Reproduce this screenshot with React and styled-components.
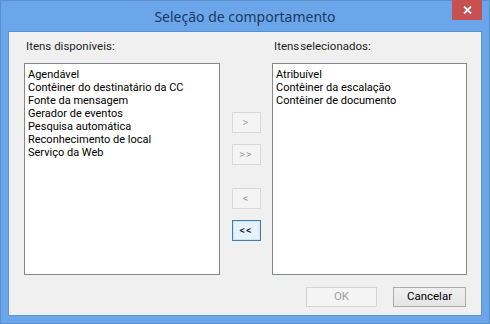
import React from 'react';
import styled, { createGlobalStyle } from 'styled-components';

const Global = createGlobalStyle`
  html, body {
    margin: 0;
    padding: 0;
    background: #6aa5e9;
  }
  * {
    box-sizing: border-box;
  }
`;

const Window = styled.div`
  width: 490px;
  height: 324px;
  background: #6ba6ea;
  border: 1px solid #5a8fd0;
  display: flex;
  flex-direction: column;
  padding: 0 7px 7px;
  font-family: Roboto, 'Noto Sans', sans-serif;
  font-size: 11.5px;
  color: #000;
`;

const TitleBar = styled.div`
  height: 30px;
  display: grid;
  grid-template-columns: 1fr auto 1fr;
  align-items: start;
`;

const Title = styled.div`
  grid-column: 2;
  margin-top: 6px;
  font-family: 'Noto Sans', sans-serif;
  font-size: 14px;
  line-height: 19px;
  color: #1b3a5c;
`;

const CloseButton = styled.div`
  grid-column: 3;
  justify-self: end;
  width: 30px;
  height: 20px;
  margin-top: -1px;
  background: #c75050;
  display: flex;
  align-items: center;
  justify-content: center;
`;

const Client = styled.div`
  flex: 1;
  background: #f0f0f0;
  border: 1px solid #5d92d3;
  border-top-color: #5a8fd0;
  padding: 0 14px 8px 15px;
  display: flex;
  flex-direction: column;
`;

const Columns = styled.div`
  display: grid;
  grid-template-columns: 196px 1fr 195px;
`;

const Panel = styled.div`
  display: flex;
  flex-direction: column;
`;

const Label = styled.div`
  height: 31px;
  padding: 7px 0 0 2px;
  line-height: 14px;
  color: #1e1e1e;
  word-spacing: ${(p) => (p.$tight ? '-2px' : '0')};
`;

const ListBox = styled.div`
  height: 212px;
  background: #fff;
  border: 1px solid #828790;
  padding: 4px 3px;
`;

const Item = styled.div`
  height: 13px;
  line-height: 13px;
  font-size: 11px;
  white-space: nowrap;
`;

const Middle = styled.div`
  display: flex;
  flex-direction: column;
  align-items: center;
  padding-top: 80px;
  gap: 11px;
`;

const MoveButton = styled.div`
  width: 29px;
  height: 21px;
  margin-top: ${(p) => (p.$spaced ? '12px' : '0')};
  border: 1px solid ${(p) => (p.$focused ? '#3c7fb1' : '#d9d9d9')};
  background: ${(p) => (p.$focused ? '#e5f1fb' : '#f4f4f4')};
  box-shadow: ${(p) => (p.$focused ? 'inset 0 0 0 1px #cfe3f5' : 'none')};
  color: ${(p) => (p.$focused ? '#1a1a1a' : '#a3a3a3')};
  display: flex;
  align-items: center;
  justify-content: center;
  font-size: 11px;
  letter-spacing: 1px;
  line-height: 1;
`;

const Footer = styled.div`
  margin-top: 12px;
  display: flex;
  justify-content: flex-end;
  gap: 16px;
  padding-right: 1px;
`;

const DialogButton = styled.div`
  width: ${(p) => p.$w}px;
  height: 20px;
  display: flex;
  align-items: center;
  justify-content: center;
  border: 1px solid ${(p) => (p.$disabled ? '#d5d5d5' : '#acacac')};
  background: ${(p) =>
    p.$disabled ? '#f4f4f4' : 'linear-gradient(#f0f0f0, #e5e5e5)'};
  color: ${(p) => (p.$disabled ? '#a0a0a0' : '#000')};
  line-height: 1;
`;

const available = [
  'Agendável',
  'Contêiner do destinatário da CC',
  'Fonte da mensagem',
  'Gerador de eventos',
  'Pesquisa automática',
  'Reconhecimento de local',
  'Serviço da Web',
];

const selected = [
  'Atribuível',
  'Contêiner da escalação',
  'Contêiner de documento',
];

export default function App() {
  return (
    <>
      <Global />
      <Window>
        <TitleBar>
          <Title>Seleção de comportamento</Title>
          <CloseButton>
            <svg width="9" height="8" viewBox="0 0 9 8">
              <path d="M1 0.5 L8 7.5 M8 0.5 L1 7.5" stroke="#fff" strokeWidth="1.8" />
            </svg>
          </CloseButton>
        </TitleBar>
        <Client>
          <Columns>
            <Panel>
              <Label>Itens disponíveis:</Label>
              <ListBox>
                {available.map((t) => (
                  <Item key={t}>{t}</Item>
                ))}
              </ListBox>
            </Panel>
            <Middle>
              <MoveButton>&gt;</MoveButton>
              <MoveButton>&gt;&gt;</MoveButton>
              <MoveButton $spaced>&lt;</MoveButton>
              <MoveButton $focused>&lt;&lt;</MoveButton>
            </Middle>
            <Panel>
              <Label $tight>Itens selecionados:</Label>
              <ListBox>
                {selected.map((t) => (
                  <Item key={t}>{t}</Item>
                ))}
              </ListBox>
            </Panel>
          </Columns>
          <Footer>
            <DialogButton $w={71} $disabled>OK</DialogButton>
            <DialogButton $w={73}>Cancelar</DialogButton>
          </Footer>
        </Client>
      </Window>
    </>
  );
}
